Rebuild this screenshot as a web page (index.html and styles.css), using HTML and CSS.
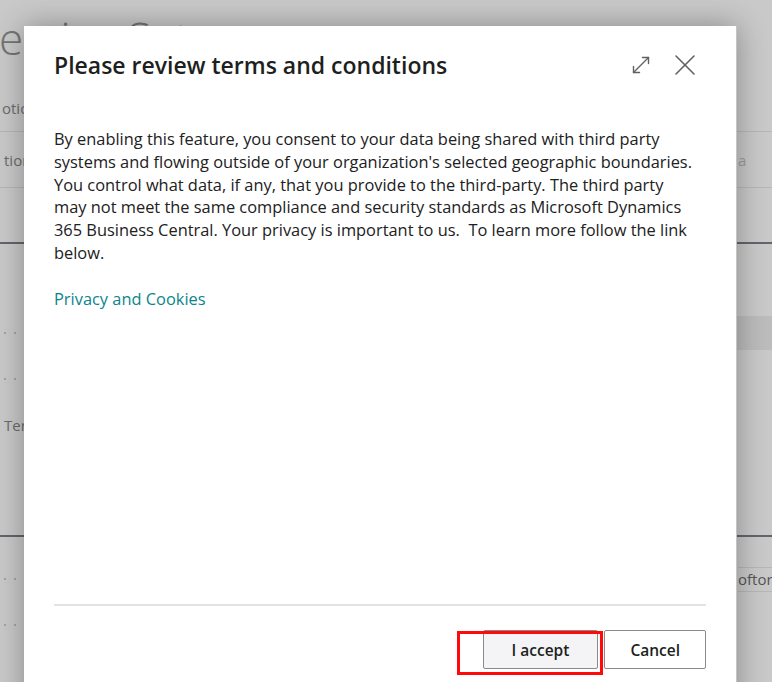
FILE: index.html
```html
<!DOCTYPE html>
<html>
    <head>
        <title>Service Setup</title>
        <link rel="stylesheet" href="styles.css">
    </head>
    <body>
        <div class="page">
            <div class="page-title">Service Setup</div>
            <div class="bg-row bg-tabs"><span class="bg-left">otions</span></div>
            <div class="bg-row bg-fields"><span class="bg-left">tion</span><span class="bg-right">a</span></div>
            <div class="bg-row bg-gap"></div>
            <div class="bg-list">
                <div class="bg-item"><span class="dots"></span><span class="bg-right band"></span></div>
                <div class="bg-item"><span class="dots"></span></div>
                <div class="bg-item"><span class="bg-left">Terms</span></div>
            </div>
            <div class="bg-lower">
                <div class="bg-item"><span class="dots"></span><span class="bg-right field">oftor</span></div>
                <div class="bg-item"><span class="dots"></span></div>
            </div>
        </div>

        <div class="dialog">
            <div class="dialog-header">
                <h1 class="dialog-title">Please review terms and conditions</h1>
                <div class="dialog-icons">
                    <button class="icon-btn" title="Expand">
                        <svg width="20" height="20" viewBox="0 0 20 20" fill="none" stroke="#616161" stroke-width="1.4" stroke-linecap="round" stroke-linejoin="round">
                            <path d="M2.5 17.5 L17.5 2.5"/>
                            <path d="M11.5 2.5 H17.5 V8.5"/>
                            <path d="M2.5 11.5 V17.5 H8.5"/>
                        </svg>
                    </button>
                    <button class="icon-btn" title="Close">
                        <svg width="22" height="22" viewBox="0 0 22 22" fill="none" stroke="#616161" stroke-width="1.6" stroke-linecap="round">
                            <path d="M2 2 L20 20"/>
                            <path d="M20 2 L2 20"/>
                        </svg>
                    </button>
                </div>
            </div>
            <div class="dialog-body">
                <p>By enabling this feature, you consent to your data being shared with third party systems and flowing outside of your organization's selected geographic boundaries. You control what data, if any, that you provide to the third-party. The third party may not meet the same compliance and security standards as Microsoft Dynamics 365 Business Central. Your privacy is important to us.&nbsp; To learn more follow the link below.</p>
                <p><a href="#" class="link">Privacy and Cookies</a></p>
            </div>
            <div class="dialog-footer">
                <button class="btn btn-primary">I accept</button>
                <button class="btn">Cancel</button>
            </div>
        </div>

        <div class="highlight"></div>
    </body>
</html>
```

FILE: styles.css
```css
* {
    box-sizing: border-box;
}
html, body {
    margin: 0;
    padding: 0;
    height: 100%;
    overflow: hidden;
}
body {
    font-family: "Open Sans", "Noto Sans", sans-serif;
    background-color: #c9c9c9;
    color: #212121;
}

/* page behind the dialog (dimmed) */
.page {
    color: #6c6c6c;
}
.page-title {
    height: 70px;
    padding-top: 16px;
    font-size: 44px;
    line-height: 44px;
    font-weight: 300;
    color: #747474;
    text-indent: -25px;
    white-space: nowrap;
}
.bg-row {
    display: flex;
    justify-content: space-between;
    font-size: 15px;
    line-height: 20px;
}
.bg-tabs {
    height: 62px;
    padding-top: 28px;
    border-bottom: 1px solid #b7b7b7;
}
.bg-tabs .bg-left {
    margin-left: -2px;
}
.bg-fields {
    height: 56px;
    padding-top: 18px;
    border-bottom: 1px solid #b7b7b7;
}
.bg-fields .bg-right {
    width: 34px;
    color: #9c9c9c;
}
.bg-gap {
    height: 56px;
    border-bottom: 2px solid #62666b;
}
.bg-list {
    padding-top: 66px;
    height: 293px;
    border-bottom: 2px solid #62666b;
}
.bg-item {
    display: flex;
    align-items: center;
    justify-content: space-between;
    height: 46px;
    font-size: 15px;
}
.bg-left {
    padding-left: 4px;
    white-space: nowrap;
}
.dots {
    width: 2px;
    height: 2px;
    margin-left: 4px;
    background-color: #a3a3a3;
    box-shadow: 10px 0 0 #a3a3a3;
}
.band {
    width: 35px;
    height: 34px;
    background-color: #bcbcbc;
}
.bg-lower {
    padding-top: 19px;
}
.field {
    width: 34px;
    height: 25px;
    line-height: 23px;
    border-top: 1px solid #b7b7b7;
    border-bottom: 1px solid #b7b7b7;
    overflow: hidden;
    white-space: nowrap;
    color: #555;
}

/* dialog */
.dialog {
    position: absolute;
    left: 24px;
    top: 26px;
    width: 713px;
    height: 700px;
    padding: 0 30px;
    background-color: #fff;
    border-right: 1px solid #c4c4c4;
    box-shadow: 0 0 28px rgba(0, 0, 0, 0.32);
}
.dialog-header {
    display: flex;
    align-items: center;
    justify-content: space-between;
    padding-top: 23px;
}
.dialog-title {
    margin: 0;
    font-size: 23px;
    line-height: 30px;
    font-weight: 600;
    color: #201f1e;
}
.dialog-icons {
    display: flex;
    gap: 12px;
    margin-right: 5px;
}
.icon-btn {
    display: flex;
    align-items: center;
    justify-content: center;
    width: 32px;
    height: 32px;
    padding: 0;
    border: none;
    background: none;
    cursor: pointer;
}
.dialog-body {
    margin-top: 47px;
    height: 478px;
    border-bottom: 2px solid #e2e2e2;
}
.dialog-body p {
    margin: 0 0 22.8px;
    width: 645px;
    font-size: 16.4px;
    line-height: 22.8px;
}
.link {
    color: #0b858d;
    text-decoration: none;
}
.dialog-footer {
    display: flex;
    justify-content: flex-end;
    gap: 6px;
    margin-top: 24px;
}
.btn {
    height: 39px;
    padding: 0 25px;
    font-family: inherit;
    font-size: 15.5px;
    font-weight: 600;
    color: #201f1e;
    background-color: #fff;
    border: 1px solid #8a8a8a;
    border-radius: 2px;
    cursor: pointer;
}
.btn-primary {
    padding: 0 28px;
    background-color: #f4f4f6;
}

/* red annotation box */
.highlight {
    position: absolute;
    left: 457px;
    top: 631px;
    width: 146px;
    height: 44px;
    border: 3px solid #ff0a0a;
}
```
